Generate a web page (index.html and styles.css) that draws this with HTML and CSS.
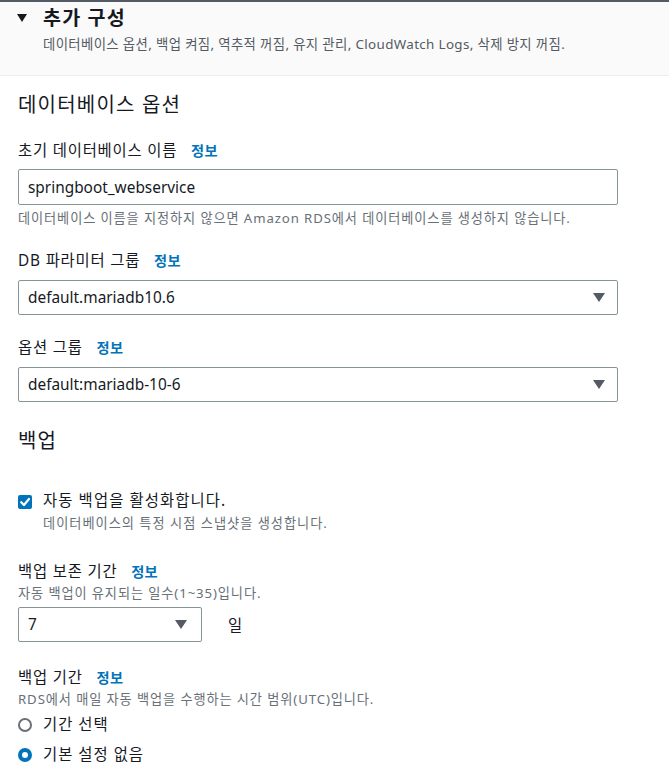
FILE: index.html
```html
<!DOCTYPE html>
<html lang="ko">
<head>
  <meta charset="UTF-8">
  <title>추가 구성</title>
  <link rel="stylesheet" href="styles.css">
</head>
<body>
  <div class="panel">
    <div class="expander">
      <div class="expander-title">
        <svg class="caret" width="10" height="8" viewBox="0 0 10 8"><polygon points="0,0 10,0 5,8" fill="#16191f"/></svg>
        <span>추가 구성</span>
      </div>
      <div class="expander-desc">데이터베이스 옵션, 백업 켜짐, 역추적 꺼짐, 유지 관리, CloudWatch Logs, 삭제 방지 꺼짐.</div>
    </div>

    <div class="content">
      <h2 class="section-title">데이터베이스 옵션</h2>

      <div class="field">
        <div class="label">초기 데이터베이스 이름 <a class="info">정보</a></div>
        <input class="text-input" type="text" value="springboot_webservice">
        <div class="hint">데이터베이스 이름을 지정하지 않으면 Amazon RDS에서 데이터베이스를 생성하지 않습니다.</div>
      </div>

      <div class="field">
        <div class="label">DB 파라미터 그룹 <a class="info">정보</a></div>
        <div class="select">
          <span>default.mariadb10.6</span>
          <svg class="arrow" width="12" height="9" viewBox="0 0 12 9"><polygon points="0,0 12,0 6,9" fill="#545b64"/></svg>
        </div>
      </div>

      <div class="field field-tight">
        <div class="label">옵션 그룹 <a class="info">정보</a></div>
        <div class="select">
          <span>default:mariadb-10-6</span>
          <svg class="arrow" width="12" height="9" viewBox="0 0 12 9"><polygon points="0,0 12,0 6,9" fill="#545b64"/></svg>
        </div>
      </div>

      <h2 class="section-title backup-title">백업</h2>

      <div class="check-row">
        <span class="checkbox">
          <svg width="14" height="14" viewBox="0 0 14 14"><polyline points="3.2,7.2 6,10 11,4" fill="none" stroke="#fff" stroke-width="2.2" stroke-linecap="round" stroke-linejoin="round"/></svg>
        </span>
        <div>
          <div class="check-label">자동 백업을 활성화합니다.</div>
          <div class="check-desc">데이터베이스의 특정 시점 스냅샷을 생성합니다.</div>
        </div>
      </div>

      <div class="field field-retention">
        <div class="label">백업 보존 기간 <a class="info">정보</a></div>
        <div class="hint hint-top">자동 백업이 유지되는 일수(1~35)입니다.</div>
        <div class="select-row">
          <div class="select select-small">
            <span>7</span>
            <svg class="arrow" width="12" height="9" viewBox="0 0 12 9"><polygon points="0,0 12,0 6,9" fill="#545b64"/></svg>
          </div>
          <span class="unit">일</span>
        </div>
      </div>

      <div class="field field-window">
        <div class="label">백업 기간 <a class="info">정보</a></div>
        <div class="hint hint-top">RDS에서 매일 자동 백업을 수행하는 시간 범위(UTC)입니다.</div>
        <div class="radio-row first">
          <span class="radio"></span>
          <span>기간 선택</span>
        </div>
        <div class="radio-row">
          <span class="radio checked"></span>
          <span>기본 설정 없음</span>
        </div>
      </div>
    </div>
  </div>
</body>
</html>
```

FILE: styles.css
```css
body {
  margin: 0;
  background-color: #fff;
  color: #16191f;
  font-family: "Noto Sans", "Noto Sans CJK KR", sans-serif;
}

.expander {
  background-color: #fafafa;
  border-top: 2px solid #545b64;
  border-bottom: 1px solid #eaeded;
  padding: 4px 18px 22px 17px;
}

.expander-title {
  display: flex;
  align-items: center;
  gap: 16px;
  font-size: 19.5px;
  font-weight: 700;
  line-height: 23px;
  letter-spacing: 1.2px;
}

.expander-desc {
  margin: 6px 0 0 26px;
  font-size: 13.4px;
  line-height: 18px;
  letter-spacing: 0.35px;
  color: #545b64;
}

.content {
  padding: 0 51px 0 18px;
}

.section-title {
  margin: 15px 0 0;
  font-size: 20px;
  font-weight: 400;
  line-height: 28px;
  letter-spacing: 1.2px;
}

.backup-title {
  margin-top: 25px;
}

.field {
  margin-top: 24px;
}

.section-title + .field {
  margin-top: 22px;
}

.field-tight {
  margin-top: 23px;
}

.label {
  font-size: 15.4px;
  line-height: 20px;
  letter-spacing: 0.8px;
}

.info {
  margin-left: 9px;
  color: #0073bb;
  font-size: 14.2px;
  font-weight: 700;
  letter-spacing: 0.4px;
  cursor: pointer;
}

.text-input {
  display: block;
  box-sizing: border-box;
  width: 100%;
  height: 36px;
  margin-top: 8px;
  padding: 0 9px;
  border: 1px solid #879596;
  border-radius: 2px;
  font-family: inherit;
  font-size: 15.4px;
  color: #16191f;
  background: #fff;
}

.hint {
  margin-top: 4px;
  font-size: 13.2px;
  line-height: 18px;
  letter-spacing: 0.9px;
  color: #687078;
}

.hint-top {
  margin-top: 2px;
}

.select {
  display: flex;
  align-items: center;
  justify-content: space-between;
  box-sizing: border-box;
  height: 35px;
  margin-top: 9px;
  padding: 0 12px 0 9px;
  border: 1px solid #879596;
  border-radius: 2px;
  font-size: 15.4px;
}

.select-row {
  display: flex;
  align-items: center;
  gap: 26px;
  margin-top: 5px;
}

.select-row .select {
  margin-top: 0;
}

.select-small {
  width: 184px;
  padding-right: 14px;
}

.unit {
  font-size: 15.4px;
}

.check-row {
  display: flex;
  align-items: flex-start;
  gap: 11px;
  margin-top: 36px;
}

.checkbox {
  display: flex;
  align-items: center;
  justify-content: center;
  flex: none;
  width: 14px;
  height: 14px;
  margin-top: 4px;
  border-radius: 2px;
  background-color: #0073bb;
}

.check-label {
  font-size: 15.4px;
  line-height: 20px;
  letter-spacing: 1.1px;
}

.check-desc {
  margin-top: 3px;
  font-size: 13.2px;
  line-height: 18px;
  letter-spacing: 1px;
  color: #687078;
}

.field-retention {
  margin-top: 30px;
}

.field-window {
  margin-top: 26px;
}

.radio-row {
  display: flex;
  align-items: center;
  gap: 11px;
  margin-top: 10px;
  font-size: 15.4px;
  line-height: 20px;
  letter-spacing: 1px;
}

.radio-row.first {
  margin-top: 7px;
}

.radio {
  box-sizing: border-box;
  width: 14px;
  height: 14px;
  border: 2px solid #687078;
  border-radius: 50%;
  background: #fff;
}

.radio.checked {
  border: 4px solid #0073bb;
}
```
